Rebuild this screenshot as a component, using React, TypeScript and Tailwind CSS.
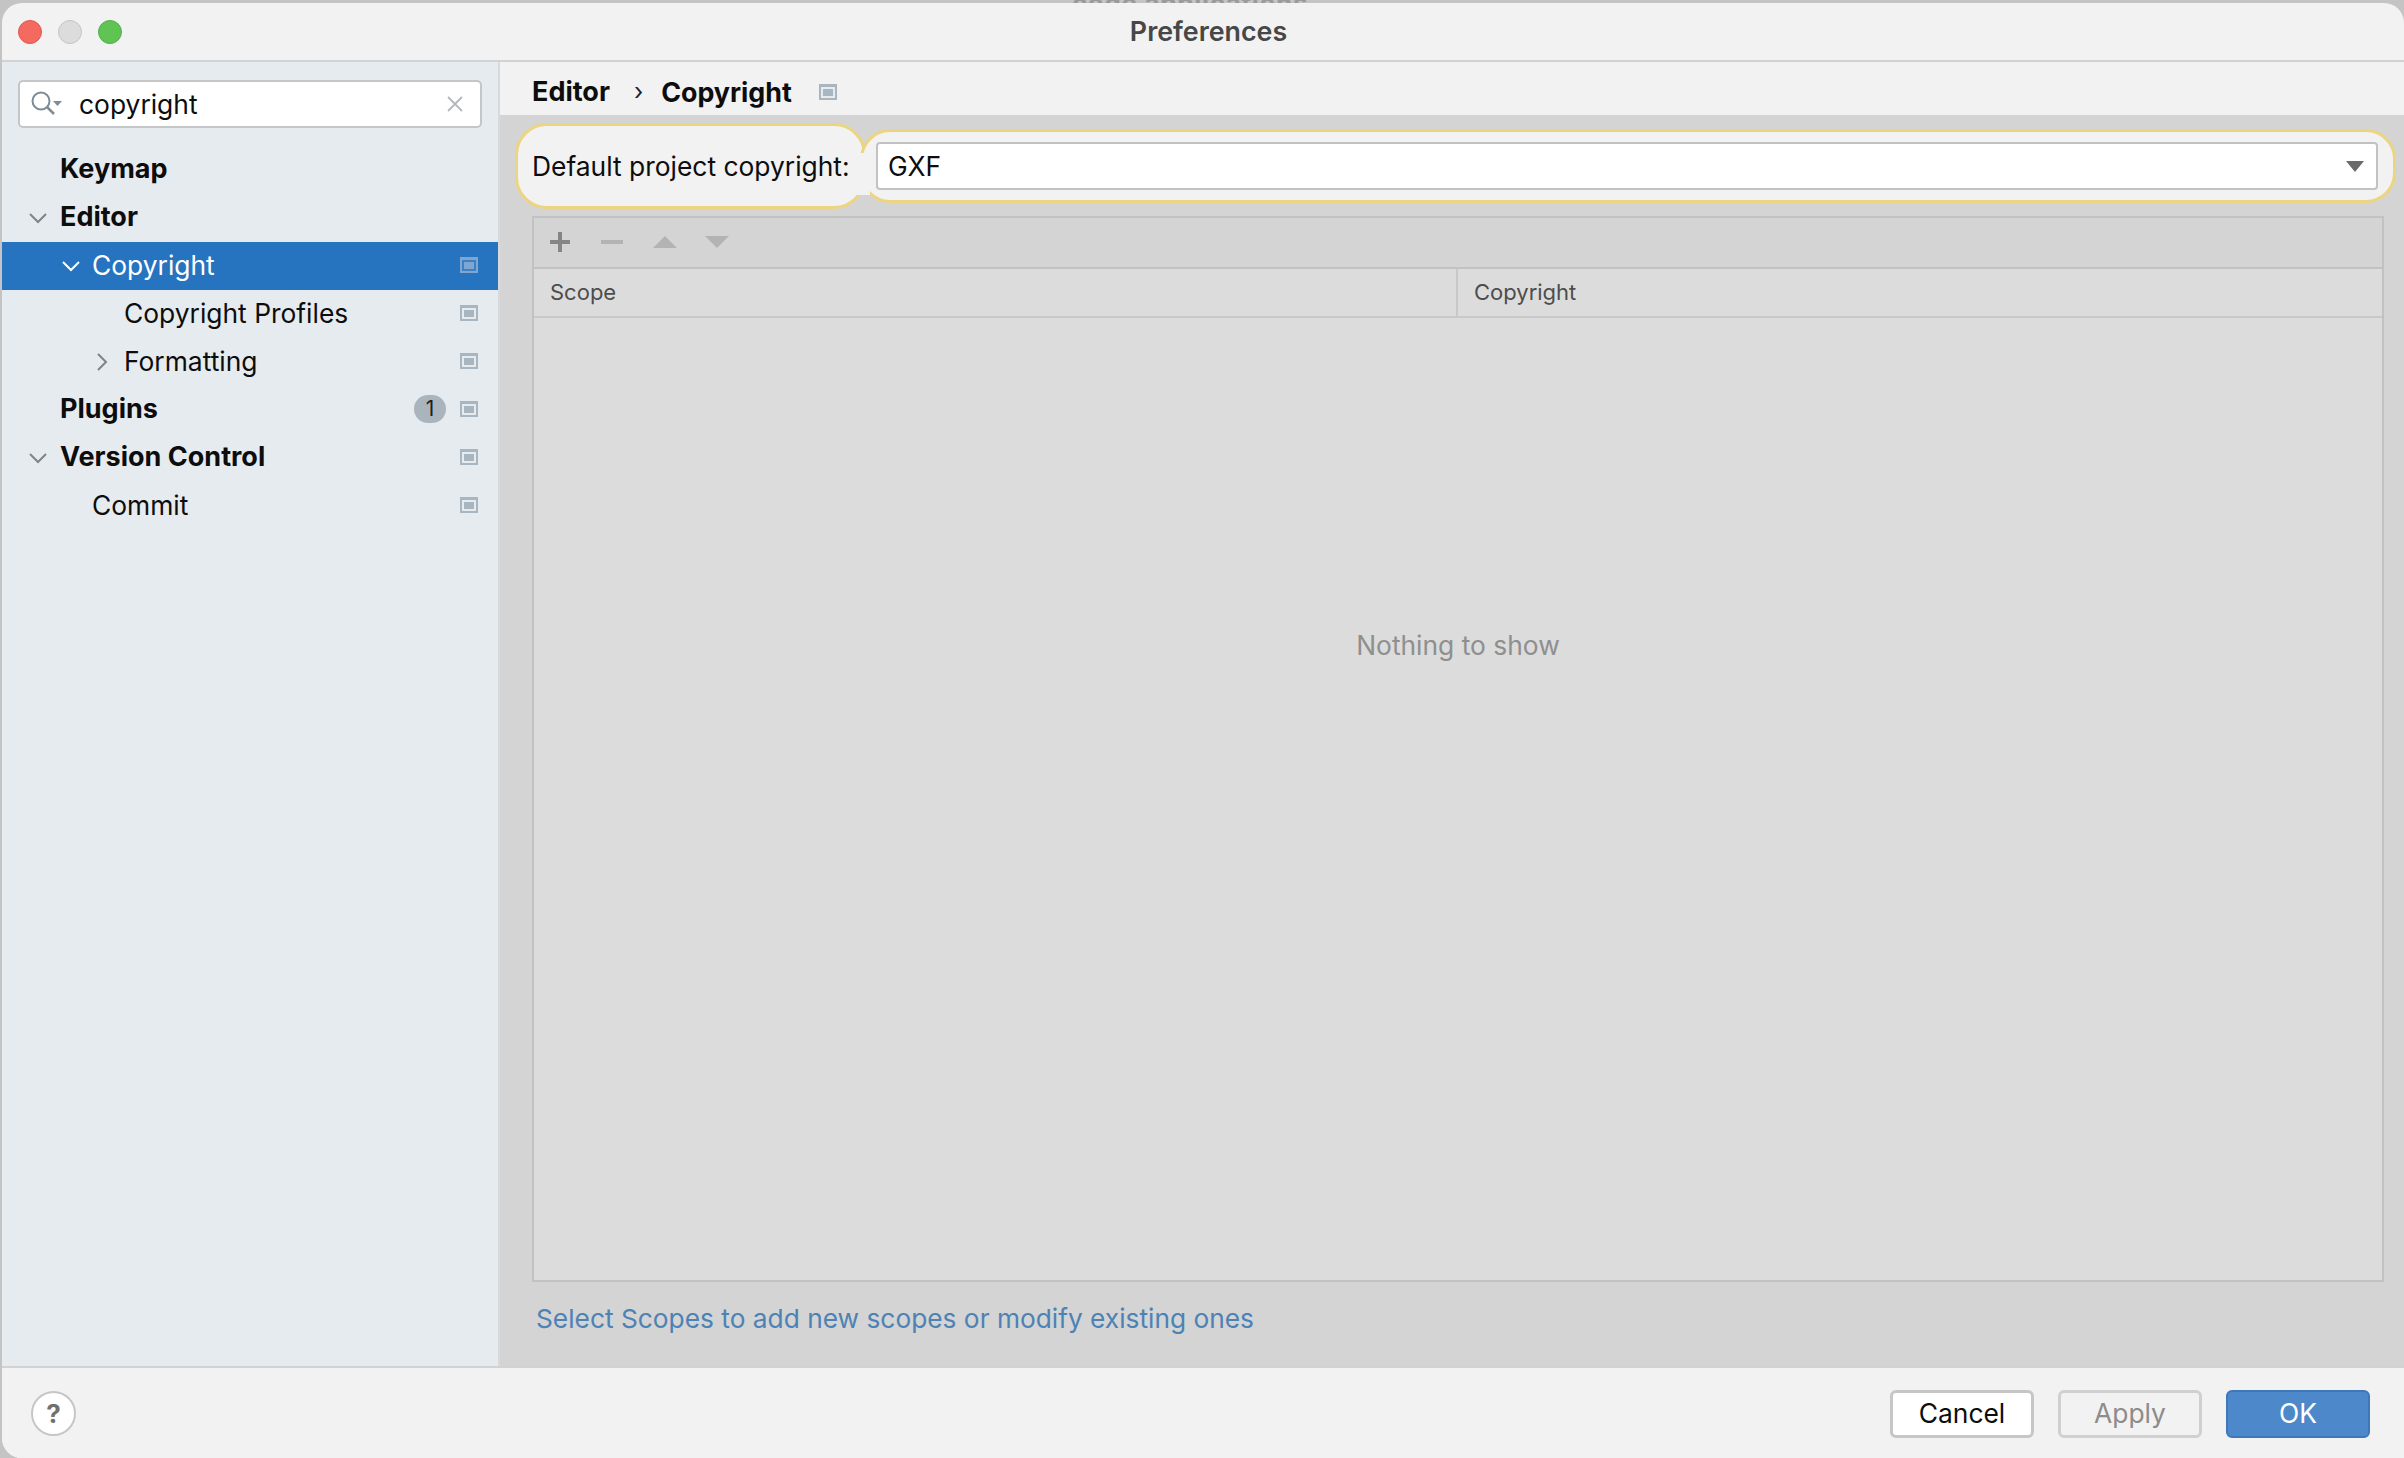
const font = "font-['Inter','Liberation_Sans',sans-serif]";

const ConfigIcon = ({ selected = false }: { selected?: boolean }) => (
  <svg width="18" height="16" viewBox="0 0 18 16" className="shrink-0">
    <rect x="0" y="0" width="18" height="16" fill={selected ? "#7fa6d0" : "#a9b6bf"} />
    <rect x="2" y="3" width="14" height="11" fill={selected ? "#3f80c2" : "#e6ebef"} />
    <rect x="4" y="5" width="10" height="7" fill={selected ? "#7fa6d0" : "#a9b6bf"} />
  </svg>
);

const Chevron = ({ dir, color = "#7f8487" }: { dir: "down" | "right"; color?: string }) => (
  <svg width="18" height="18" viewBox="0 0 18 18" fill="none" stroke={color} strokeWidth="2" className="shrink-0">
    {dir === "down" ? <path d="M1 5l8 8 8-8" /> : <path d="M5 1l8 8-8 8" />}
  </svg>
);

interface RowProps {
  label: string;
  indent: number;
  bold?: boolean;
  selected?: boolean;
  chevron?: "down" | "right";
  config?: boolean;
  badge?: string;
}

const TreeRow = ({ label, indent, bold, selected, chevron, config = true, badge }: RowProps) => (
  <div
    className={`relative flex h-[48px] items-center pr-[20px] ${selected ? "bg-[#2673bf] text-white" : "text-[#0d0d0d]"}`}
    style={{ paddingLeft: indent }}
  >
    {chevron && (
      <span className="absolute top-[15px]" style={{ left: selected ? indent - 30 : indent - 31 }}>
        <Chevron dir={chevron} color={selected ? "#ffffff" : "#7f8487"} />
      </span>
    )}
    <span className={`pb-[2px] leading-[32px] ${bold ? "text-[27px] font-bold" : "text-[26.4px] font-normal"}`}>
      {label}
    </span>
    <div className="ml-auto flex items-center pb-[2px]">
      {badge && (
        <span className="mr-[14px] flex h-[28px] w-[32px] items-center justify-center rounded-full bg-[#a9b4bd] text-[21px] text-[#1f1f1f]">
          {badge}
        </span>
      )}
      {config && <ConfigIcon selected={selected} />}
    </div>
  </div>
);

const Sidebar = () => (
  <aside className="flex w-[496px] shrink-0 flex-col bg-[#e6ebef]">
    <div className="px-[16px] pt-[18px] pb-[18px]">
      <div className="flex h-[48px] w-[464px] items-center rounded-[5px] border-2 border-[#c4c6c8] bg-white pl-[10px] pr-[17px]">
        <svg width="34" height="26" viewBox="0 0 34 26" fill="none" className="shrink-0">
          <circle cx="11" cy="10" r="8.5" stroke="#7d8c96" strokeWidth="2" />
          <path d="M17 16l7 7" stroke="#7d8c96" strokeWidth="2.5" />
          <path d="M23 10h9l-4.500 5z" fill="#7d8c96" />
        </svg>
        <span className="ml-[15px] text-[26.4px] leading-[32px] text-[#0d0d0d]">copyright</span>
        <svg width="16" height="16" viewBox="0 0 16 16" stroke="#b5b8ba" strokeWidth="1.800" className="ml-auto">
          <path d="M1 1l14 14M15 1L1 15" />
        </svg>
      </div>
    </div>
    <TreeRow label="Keymap" indent={58} bold config={false} />
    <TreeRow label="Editor" indent={58} bold chevron="down" config={false} />
    <TreeRow label="Copyright" indent={90} selected chevron="down" />
    <TreeRow label="Copyright Profiles" indent={122} />
    <TreeRow label="Formatting" indent={122} chevron="right" />
    <TreeRow label="Plugins" indent={58} bold badge="1" />
    <TreeRow label="Version Control" indent={58} bold chevron="down" />
    <TreeRow label="Commit" indent={90} />
  </aside>
);

const CopyrightPanel = () => (
  <main className="flex min-w-0 flex-1 flex-col border-l-2 border-[#d9d9d9] bg-[#d4d4d4]">
    <div className="flex h-[53px] shrink-0 items-center bg-[#f2f2f2] pl-[32px] pt-[7px]">
      <span className="text-[27px] font-bold text-[#0d0d0d]">Editor</span>
      <span className="ml-[24px] text-[24px] leading-none text-[#222]">›</span>
      <span className="ml-[18px] text-[26.800px] font-bold text-[#0d0d0d]">Copyright</span>
      <span className="ml-[27px]">
        <ConfigIcon />
      </span>
    </div>

    <div className="relative flex shrink-0 items-center pt-[8px] pl-[15px]">
      <div className="flex h-[86px] w-[351px] shrink-0 items-center rounded-[32px] border-[3px] border-[#ebd583] bg-[#f2f2f2] pl-[14px] pt-[2px] text-[26.4px] text-[#0d0d0d]">
        Default project copyright:
      </div>
      <div className="ml-[-6px] flex h-[74px] w-[1536px] shrink-0 items-center rounded-[30px] border-[3px] border-[#ebd583] bg-[#f2f2f2] pl-[13px] pr-[15px]">
        <div className="flex h-[48px] w-full items-center rounded-[4px] border-2 border-[#c2c2c2] bg-white pl-[10px] pr-[12px]">
          <span className="pt-[1px] text-[26.4px] text-[#0d0d0d]">GXF</span>
          <svg width="18" height="11" viewBox="0 0 18 11" className="ml-auto">
            <path d="M0 0h18l-9 11z" fill="#6b6b6b" />
          </svg>
        </div>
      </div>
      {/* joins the two highlight shapes */}
      <span className="absolute left-[354px] top-[38px] h-[42px] w-[16px] bg-[#f2f2f2]" />
    </div>

    <div className="ml-[32px] mt-[7px] flex h-[1066px] w-[1852px] shrink-0 flex-col border-2 border-[#c2c2c2]">
      <div className="flex h-[49px] shrink-0 items-center gap-[30px] pb-[2px] pl-[15px]">
        <svg width="22" height="22" viewBox="0 0 22 22">
          <path d="M9 1h4v8h8v4h-8v8H9v-8H1V9h8z" fill="#858585" />
        </svg>
        <svg width="22" height="4" viewBox="0 0 22 4">
          <rect width="22" height="4" fill="#b3b3b3" />
        </svg>
        <svg width="24" height="12" viewBox="0 0 24 12">
          <path d="M12 0l12 12H0z" fill="#b3b3b3" />
        </svg>
        <svg width="24" height="12" viewBox="0 0 24 12" className="ml-[-2px]">
          <path d="M0 0h24L12 12z" fill="#b3b3b3" />
        </svg>
      </div>
      <div className="flex h-[51px] shrink-0 border-y-2 border-t-[#c2c2c2] border-b-[#c8c8c8] bg-[#dcdcdc] text-[22px] text-[#4d4d4d]">
        <div className="flex w-[924px] items-center border-r-2 border-[#c8c8c8] pl-[16px]">Scope</div>
        <div className="flex flex-1 items-center pl-[16px]">Copyright</div>
      </div>
      <div className="flex flex-1 justify-center bg-[#dcdcdc] pt-[309px] text-[26.400px] leading-[36px] text-[#8f8f8f]">
        Nothing to show
      </div>
    </div>

    <div className="pl-[36px] pt-[21px] text-[26.300px] leading-[32px] text-[#4d82b5]">
      Select Scopes to add new scopes or modify existing ones
    </div>
  </main>
);

const Footer = () => (
  <footer className="flex h-[92px] shrink-0 items-center border-t-2 border-[#d2d2d2] bg-[#f2f2f2] pt-[1px] pl-[29px] pr-[34px]">
    <span className="flex h-[45px] w-[45px] items-center justify-center rounded-full border-2 border-[#c6c6c6] bg-white text-[26px] font-bold text-[#707070]">
      ?
    </span>
    <div className="ml-auto flex items-center gap-[24px]">
      <button className="h-[48px] w-[144px] rounded-[6px] border-[3px] border-[#c6c6c6] bg-white pt-[1px] text-[26.4px] text-[#0d0d0d]">
        Cancel
      </button>
      <button className="h-[48px] w-[144px] rounded-[6px] border-[3px] border-[#d0d0d0] bg-[#f2f2f2] pt-[1px] text-[26.4px] text-[#8c8c8c]">
        Apply
      </button>
      <button className="h-[48px] w-[144px] rounded-[6px] border-2 border-[#3f78b8] bg-[#4d88ca] pt-[1px] text-[26.4px] text-white">
        OK
      </button>
    </div>
  </footer>
);

export default function App() {
  return (
    <div className={`${font} flex h-[1458px] w-[2404px] flex-col overflow-hidden bg-[#c4c4c4]`}>
      <div className="h-[3px] shrink-0 overflow-hidden pr-[24px] text-center text-[26px] font-bold leading-[8px] tracking-wide text-[#9a9a9a]">
        code applications
      </div>
      <div className="ml-[2px] flex min-h-0 flex-1 flex-col overflow-hidden rounded-t-[20px] rounded-bl-[20px] bg-[#f2f2f2]">
        <header className="relative flex h-[59px] shrink-0 items-center border-b-2 border-[#d2d2d2] pl-[16px]">
          <div className="flex gap-[16px]">
            <span className="h-[24px] w-[24px] rounded-full border border-[#e0564e] bg-[#f46a60]" />
            <span className="h-[24px] w-[24px] rounded-full border border-[#c4c4c4] bg-[#dcdcdc]" />
            <span className="h-[24px] w-[24px] rounded-full border border-[#50b048] bg-[#5fc454]" />
          </div>
          <span className="absolute inset-x-0 pl-[11px] text-center text-[26.8px] font-semibold text-[#474747]">Preferences</span>
        </header>
        <div className="flex min-h-0 flex-1">
          <Sidebar />
          <CopyrightPanel />
        </div>
        <Footer />
      </div>
    </div>
  );
}
